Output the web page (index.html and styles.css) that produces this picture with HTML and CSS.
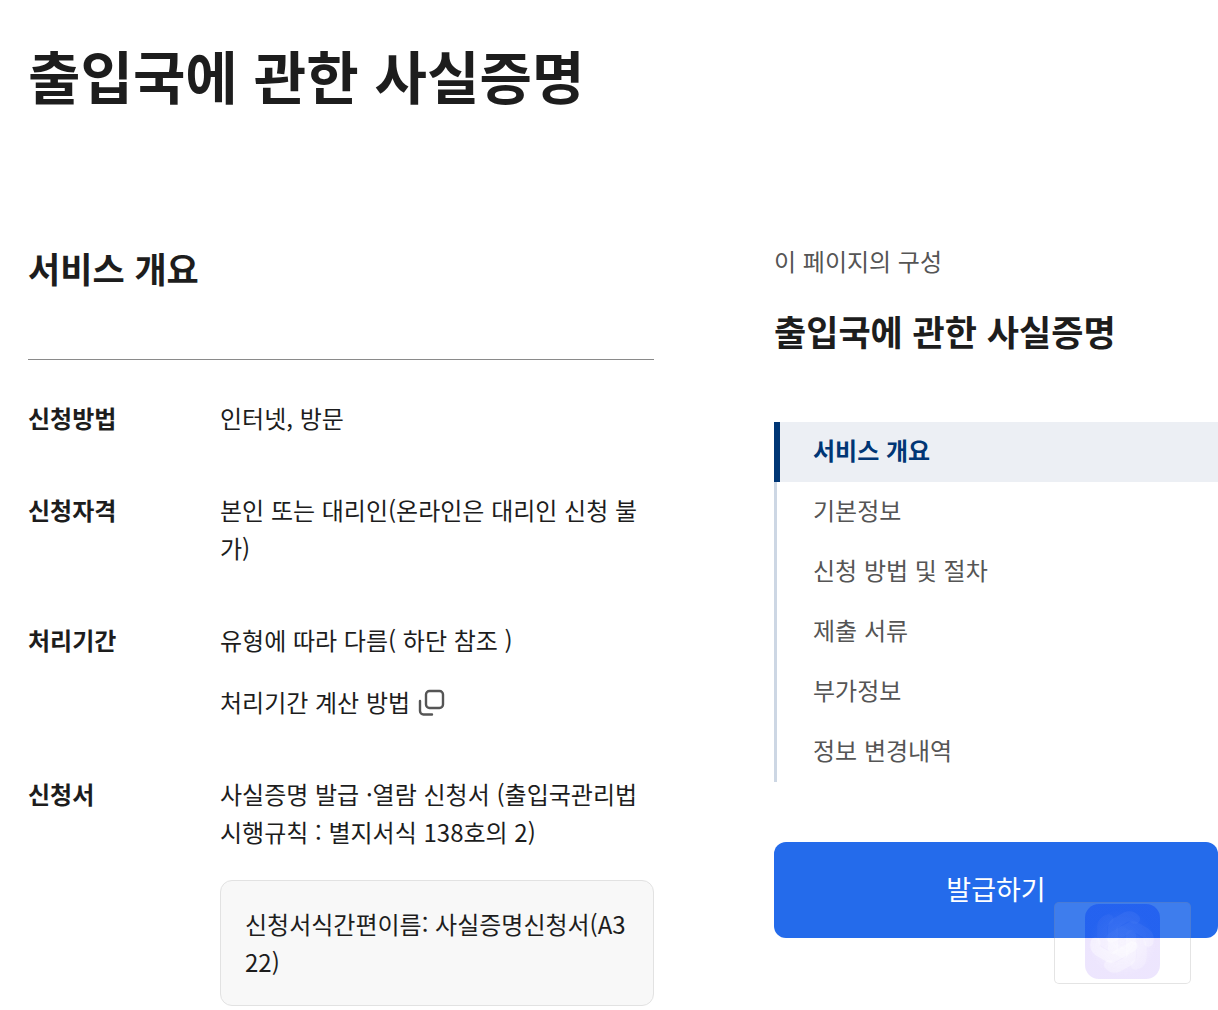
FILE: index.html
```html
<!DOCTYPE html>
<html lang="ko">
<head>
    <meta charset="UTF-8">
    <meta name="viewport" content="width=device-width, initial-scale=1.0">
    <title>출입국에 관한 사실증명</title>
    <link rel="stylesheet" href="styles.css">
</head>
<body>

<div class="page">
    <h1 class="page-title">출입국에 관한 사실증명</h1>

    <div class="columns">
        <main class="content">
            <h2 class="section-title" id="overview">서비스 개요</h2>

            <dl class="info-list">
                <div class="info-row">
                    <dt>신청방법</dt>
                    <dd>인터넷, 방문</dd>
                </div>
                <div class="info-row">
                    <dt>신청자격</dt>
                    <dd>본인 또는 대리인(온라인은 대리인 신청 불가)</dd>
                </div>
                <div class="info-row">
                    <dt>처리기간</dt>
                    <dd>
                        <p>유형에 따라 다름( 하단 참조 )</p>
                        <a class="popup-link" href="#period">처리기간 계산 방법
                            <svg class="popup-icon" viewBox="0 0 28 28" aria-hidden="true">
                                <rect x="8" y="3" width="17" height="17" rx="3.5"/>
                                <path d="M2 13v10a3.500 3.500 0 0 0 3.500 3.500H14"/>
                            </svg>
                        </a>
                    </dd>
                </div>
                <div class="info-row">
                    <dt>신청서</dt>
                    <dd>
                        <p>사실증명 발급 ·열람 신청서 (출입국관리법 시행규칙 : 별지서식 138호의 2)</p>
                        <div class="form-box">신청서식간편이름: 사실증명신청서(A322)</div>
                    </dd>
                </div>
            </dl>
        </main>

        <aside class="side">
            <p class="side-label">이 페이지의 구성</p>
            <h2 class="side-title">출입국에 관한 사실증명</h2>
            <nav class="side-nav">
                <a class="active" href="#overview">서비스 개요</a>
                <a href="#basic">기본정보</a>
                <a href="#steps">신청 방법 및 절차</a>
                <a href="#documents">제출 서류</a>
                <a href="#extra">부가정보</a>
                <a href="#history">정보 변경내역</a>
            </nav>
            <button type="button" class="issue-button">발급하기</button>
        </aside>
    </div>
</div>

<!-- floating widget, bottom right -->
<div class="widget">
    <svg class="widget-icon" viewBox="0 0 75 75" aria-hidden="true">
        <defs>
            <radialGradient id="glow">
                <stop offset="0" stop-color="#fff" stop-opacity="0.6"/>
                <stop offset="1" stop-color="#fff" stop-opacity="0"/>
            </radialGradient>
            <linearGradient id="shade" x1="0" y1="0" x2="0" y2="1">
                <stop offset="0" stop-color="#1450f0" stop-opacity="0.6"/>
                <stop offset="0.45" stop-color="#1450f0" stop-opacity="0.6"/>
                <stop offset="0.45" stop-color="#6a2cf5" stop-opacity="0.12"/>
                <stop offset="1" stop-color="#6a2cf5" stop-opacity="0.12"/>
            </linearGradient>
            <!-- the glow is weaker over the blue half -->
            <linearGradient id="fade" x1="0" y1="0" x2="0" y2="1">
                <stop offset="0" stop-color="#fff" stop-opacity="0.15"/>
                <stop offset="0.45" stop-color="#fff" stop-opacity="0.15"/>
                <stop offset="0.45" stop-color="#fff"/>
                <stop offset="1" stop-color="#fff"/>
            </linearGradient>
            <mask id="half">
                <rect width="75" height="75" fill="url(#fade)"/>
            </mask>
            <path id="arm" d="M28 45V24q0-4 4-6l9-5q5-2 9 2"/>
        </defs>
        <rect width="75" height="75" rx="14" fill="url(#shade)"/>
        <g mask="url(#half)">
            <circle cx="37" cy="38" r="34" fill="url(#glow)"/>
            <!-- six bent arms turned round the centre -->
            <g class="swirl">
                <use href="#arm" opacity="0.3"/>
                <use href="#arm" opacity="0.3" transform="rotate(60 37 38)"/>
                <use href="#arm" opacity="0.2" transform="rotate(120 37 38)"/>
                <use href="#arm" opacity="0.3" transform="rotate(180 37 38)"/>
                <use href="#arm" opacity="0.4" transform="rotate(240 37 38)"/>
                <use href="#arm" opacity="0.2" transform="rotate(300 37 38)"/>
            </g>
        </g>
    </svg>
</div>

</body>
</html>
```
FILE: styles.css
```css
* {
    box-sizing: border-box;
}
body {
    margin: 0;
    background-color: #fff;
    color: #1d1d1d;
    font-family: "Noto Sans CJK KR", sans-serif;
    font-size: 24px;
    line-height: 38px;
}
h1, h2, p, dl, dd {
    margin: 0;
}
a {
    color: inherit;
    text-decoration: none;
}
.page {
    padding: 32px 0 0 28px;
}
.page-title {
    font-size: 57px;
    line-height: 84px;
    font-weight: 700;
}
.columns {
    display: grid;
    grid-template-columns: minmax(0, 1fr) 444px;
    gap: 120px;
    align-items: start;
    margin-top: 126px;
}
.section-title,
.side-title {
    font-size: 35px;
    line-height: 52px;
    font-weight: 700;
}
.info-list {
    display: flex;
    flex-direction: column;
    gap: 54px;
    margin-top: 65px;
    padding-top: 39px;
    border-top: 1px solid #8a8a8a;
}
.info-row {
    display: grid;
    grid-template-columns: 192px minmax(0, 1fr);
}
.info-row dt {
    font-weight: 700;
}
.popup-link {
    display: flex;
    align-items: center;
    gap: 8px;
    margin-top: 24px;
}
.popup-icon {
    width: 28px;
    height: 28px;
    fill: none;
    stroke: #555;
    stroke-width: 2.4;
    stroke-linecap: round;
}
.form-box {
    margin-top: 29px;
    padding: 24px;
    border: 1px solid #e2e2e2;
    border-radius: 12px;
    background-color: #f8f8f8;
    word-break: break-all;
}
.side-label {
    color: #555;
}
.side-title {
    margin-top: 25px;
}
.side-nav {
    display: flex;
    flex-direction: column;
    margin-top: 65px;
}
.side-nav a {
    padding: 9px 36px 13px;
    border-left: 3px solid #cdd7e4;
    color: #555;
}
.side-nav a.active {
    padding-left: 33px;
    border-left: 6px solid #003675;
    background-color: #eceff4;
    color: #003675;
    font-weight: 700;
}
.issue-button {
    width: 100%;
    height: 96px;
    margin-top: 60px;
    padding: 0 0 4px;
    border: 0;
    border-radius: 12px;
    background-color: #246beb;
    color: #fff;
    font-family: inherit;
    font-size: 27px;
    cursor: pointer;
}
.widget {
    position: fixed;
    right: 27px;
    bottom: 26px;
    display: flex;
    justify-content: center;
    width: 137px;
    padding: 1px 0 4px;
    border: 1px solid rgba(120, 120, 120, 0.2);
    border-radius: 5px;
    background-color: rgba(255, 255, 255, 0.12);
}
.widget-icon {
    width: 75px;
    height: 75px;
}
.swirl {
    fill: none;
    stroke: #fff;
    stroke-width: 10;
    stroke-linecap: round;
}
```
